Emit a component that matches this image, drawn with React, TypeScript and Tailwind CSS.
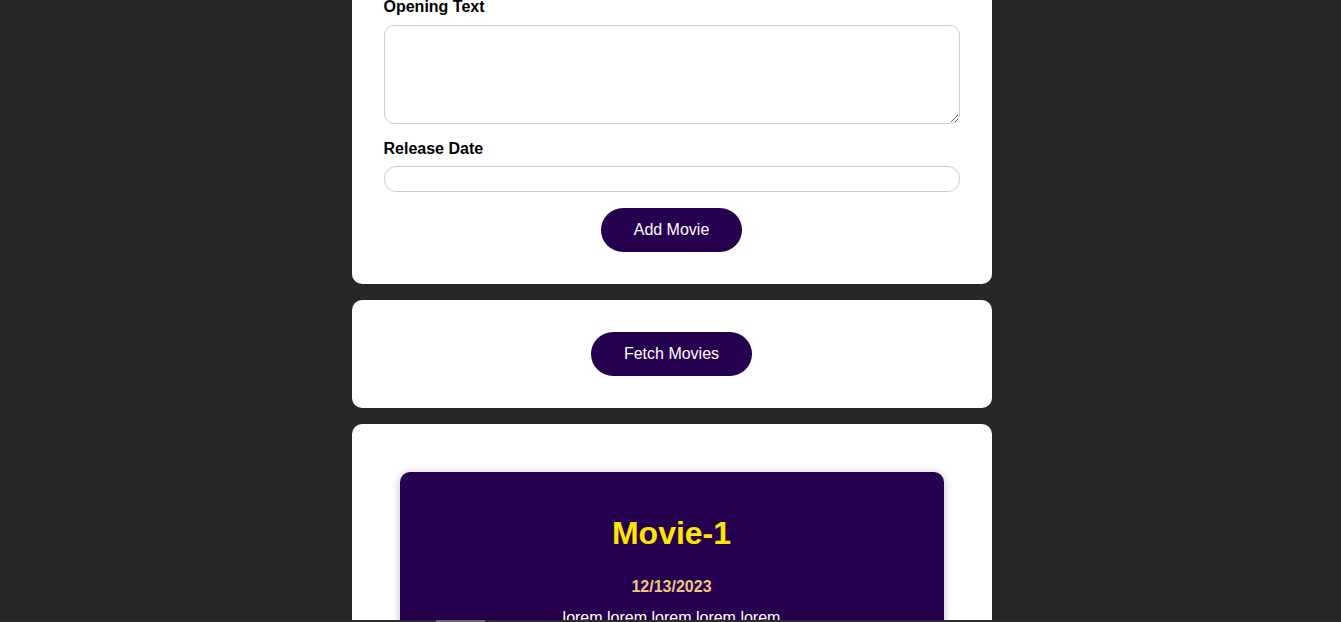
import React from 'react'

const font = { fontFamily: '"Liberation Sans", Arial, sans-serif' }

const PillButton = ({ children }: { children: React.ReactNode }) => (
  <button className="h-[44px] px-[33px] rounded-[22px] bg-[#25004f] text-white text-base leading-[18px]">
    {children}
  </button>
)

export default function App() {
  return (
    <div style={font} className="min-h-screen bg-[#262626] overflow-hidden">
      <div className="w-[640px] mx-auto relative left-[1px] flex flex-col gap-4 pb-10">
        <section className="-mt-[20px] bg-white rounded-b-[10px] px-8 pt-[18px] pb-8 flex flex-col">
          <label className="font-bold text-base leading-[18px] text-black mb-[9px]">Opening Text</label>
          <textarea className="h-[99px] w-full border border-[#cccccc] rounded-[10px] resize-y outline-none" />
          <label className="font-bold text-base leading-[18px] text-black mt-[16px] mb-[8px]">Release Date</label>
          <input type="text" className="h-[26px] w-full border border-[#cccccc] rounded-[12px] outline-none" />
          <div className="flex justify-center mt-4">
            <PillButton>Add Movie</PillButton>
          </div>
        </section>

        {/* Fetch */}
        <section className="bg-white rounded-[10px] py-8 flex justify-center">
          <PillButton>Fetch Movies</PillButton>
        </section>

        {/* Movie list */}
        <section className="bg-white rounded-[10px] pt-12 px-12 pb-12">
          <ul className="flex flex-col gap-8">
            <li className="bg-[#25004f] rounded-[10px] shadow-[0_1px_8px_rgba(0,0,0,0.25)] pt-[43px] pb-8 px-8 text-center">
              <h2 className="text-[32px] leading-[36px] font-bold text-[#ffe600]">Movie-1</h2>
              <h3 className="mt-[27px] text-base leading-[18px] font-bold text-[#eec77f]">12/13/2023</h3>
              <p className="mt-[13px] text-base leading-[18px] text-white">lorem lorem lorem lorem lorem</p>
            </li>
          </ul>
        </section>
      </div>

      {/* horizontal scrollbar strip at the bottom edge */}
      <div className="fixed left-0 right-0 bottom-0 h-[2px] bg-[#2c2c28]">
        <div className="absolute left-[436px] w-[49px] h-[2px] bg-[#6b6b66]" />
      </div>
    </div>
  )
}
